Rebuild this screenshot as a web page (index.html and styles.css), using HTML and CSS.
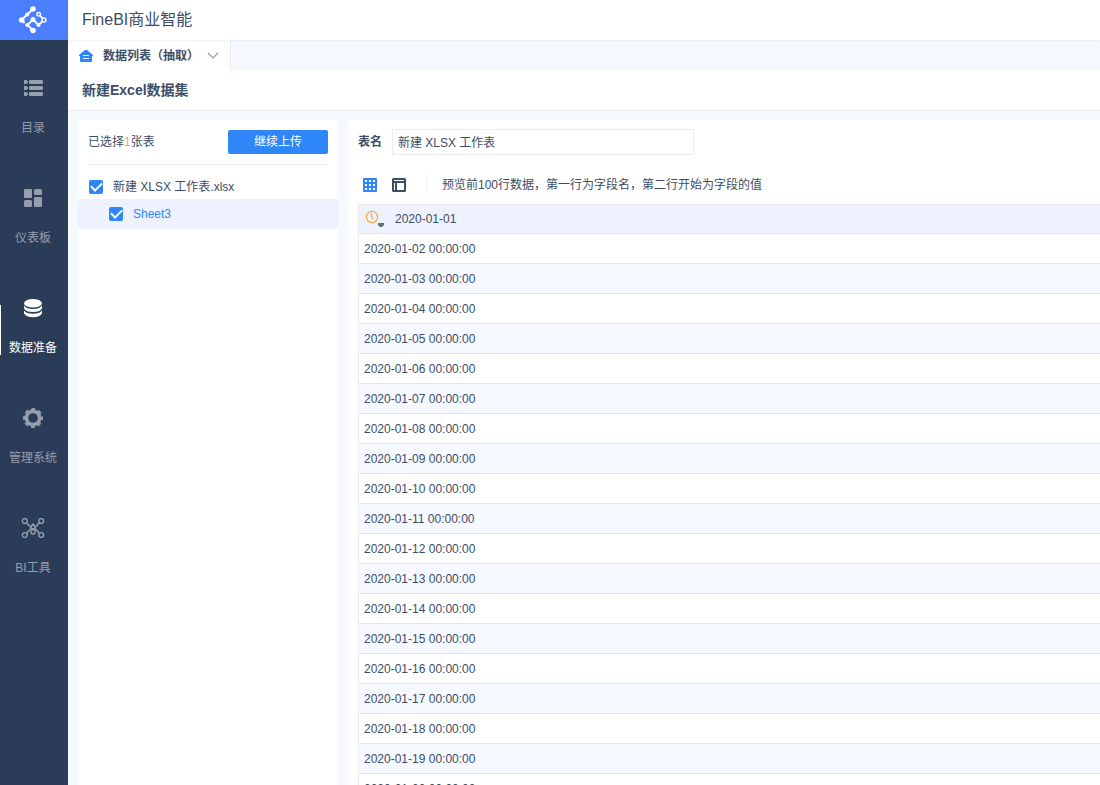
FILE: index.html
```html
<!DOCTYPE html>
<html lang="zh-CN">
<head>
<meta charset="utf-8">
<meta name="viewport" content="width=device-width, initial-scale=1">
<title>FineBI商业智能</title>
<link rel="stylesheet" href="styles.css">
</head>
<body>
<div class="app">
  <aside class="sidebar">
    <a class="logo" href="#" aria-label="FineBI">
      <svg width="30" height="30" viewBox="0 0 30 30" fill="none" stroke="#fff" stroke-width="1.800">
        <path d="M15 4L3.500 15M21 9.500L26 15l-5.500 5L15 14.500 9.500 20l5.500 5.500M3.500 15l3 3"/>
        <g fill="#fff" stroke="none"><circle cx="15" cy="4" r="2.800"/><circle cx="3.700" cy="15" r="2.800"/><circle cx="15" cy="25.500" r="2.800"/><circle cx="9.300" cy="9.500" r="2.100"/><circle cx="9.300" cy="20" r="2.100"/><circle cx="15" cy="14.500" r="2.500"/><circle cx="20.500" cy="20" r="2"/></g>
        <g fill="#4b7dff" stroke-width="1.400"><circle cx="20.700" cy="9.300" r="1.800"/><circle cx="26" cy="15" r="2"/></g>
      </svg>
    </a>
    <nav class="nav">
      <a class="nav-item" href="#">
        <svg width="20" height="20" viewBox="0 0 20 20" fill="currentColor"><path d="M1 2h3v1h1v2H4v1H1zM1 8h3v1h1v2H4v1H1zM1 14h3v1h1v2H4v1H1z"/><rect x="6" y="2" width="14" height="4" rx="1"/><rect x="6" y="8" width="14" height="4" rx="1"/><rect x="6" y="14" width="14" height="4" rx="1"/></svg>
        <span>目录</span>
      </a>
      <a class="nav-item" href="#">
        <svg width="20" height="20" viewBox="0 0 20 20" fill="currentColor"><rect x="1" y="1" width="8" height="9" rx="1"/><rect x="11" y="1" width="8" height="6" rx="1.500"/><rect x="1" y="12" width="8" height="7" rx="1.500"/><rect x="11" y="9" width="8" height="10" rx="1"/></svg>
        <span>仪表板</span>
      </a>
      <a class="nav-item nav-item-active" href="#" aria-current="page">
        <svg width="20" height="20" viewBox="0 0 20 20" fill="currentColor"><ellipse cx="10" cy="5.300" rx="9" ry="4.300"/><path d="M1 7.500q2.500 3.500 9 3.500t9-3.500v3q-2 3.500-9 3.500t-9-3.500zM1 12.500q2.500 3.200 9 3.200t9-3.200v3q-2 3.700-9 3.700t-9-3.700z"/></svg>
        <span>数据准备</span>
      </a>
      <a class="nav-item" href="#">
        <svg width="20" height="20" viewBox="0 0 20 20"><g fill="none" stroke="currentColor"><circle cx="10" cy="10" r="6.600" stroke-width="3.600"/><circle cx="10" cy="10" r="8.800" stroke-width="2.400" stroke-dasharray="3.900 3.012" stroke-dashoffset="1.950"/></g></svg>
        <span>管理系统</span>
      </a>
      <a class="nav-item" href="#">
        <svg width="24" height="20" viewBox="0 0 24 20" fill="none" stroke="currentColor" stroke-width="1.400"><circle cx="3.800" cy="3" r="2.400"/><circle cx="20.200" cy="3" r="2.400"/><circle cx="3.800" cy="17" r="2.400"/><circle cx="20.200" cy="17" r="2.400"/><path d="M5.500 4.700L9.500 9M18.500 4.700L14.500 9M5.500 15.300l4.500-4.800M18.500 15.300L14 10.500M12 6l2.500 3-2.500 2.500L9.500 9z"/><circle cx="12" cy="13.800" r="2.200"/></svg>
        <span>BI工具</span>
      </a>
    </nav>
  </aside>

  <div class="main">
    <header class="topbar">FineBI商业智能</header>
    <div class="tabs">
      <button class="tab" type="button">
        <svg width="14" height="12" viewBox="0 0 14 12"><path d="M6 0h2l6 5v1h-1v5q0 1-1 1H2q-1 0-1-1V6H0V5z" fill="#2e86f8"/><path d="M4 5.500h6M4 8.500h6" stroke="#fff"/></svg>
        <span class="tab-name">数据列表（抽取）</span>
        <svg width="12" height="8" viewBox="0 0 12 8" fill="none" stroke="#8f9bab" stroke-width="1.200"><path d="M1 1l5 5 5-5"/></svg>
      </button>
    </div>
    <h1 class="title">新建Excel数据集</h1>

    <div class="content">
      <section class="panel files">
        <div class="files-head">
          <span>已选择<em class="count">1</em>张表</span>
          <button class="upload" type="button">继续上传</button>
        </div>
        <label class="file"><input class="check" type="checkbox" checked><span>新建 XLSX 工作表.xlsx</span></label>
        <label class="file sheet"><input class="check" type="checkbox" checked><span>Sheet3</span></label>
      </section>

      <section class="panel preview">
        <div class="name-row">
          <label class="name-label" for="table-name">表名</label>
          <input class="name-input" id="table-name" type="text" value="新建 XLSX 工作表">
        </div>
        <div class="tools">
          <button class="tool" type="button" aria-label="表格预览">
            <svg width="14" height="14" viewBox="0 0 14 14"><rect width="14" height="14" rx="1" fill="#2e86f8"/><path fill="#fff" d="M2 2h2v2H2zM6 2h2v2H6zM10 2h2v2h-2zM2 6h2v2H2zM6 6h2v2H6zM10 6h2v2h-2zM2 10h2v2H2zM6 10h2v2H6zM10 10h2v2h-2z"/></svg>
          </button>
          <button class="tool" type="button" aria-label="字段设置">
            <svg width="14" height="14" viewBox="0 0 14 14"><path fill="#3d4d66" fill-rule="evenodd" d="M1 0h12l1 1v12l-1 1H1l-1-1V1zM2 2v1h10V2zM2 5v7h1V5zM5 5v7h7V5z"/></svg>
          </button>
          <p class="hint">预览前100行数据，第一行为字段名，第二行开始为字段的值</p>
        </div>
        <table class="grid">
          <thead>
            <tr><th scope="col"><div class="field">
              <svg width="20" height="18" viewBox="0 0 20 18"><g fill="none" stroke="#faa93a" stroke-width="1.200"><circle cx="8" cy="7" r="5.600"/><path d="M7.500 3v3.500L9 9"/></g><path d="M14 13h6v2l-2 2h-2l-2-2z" fill="#5f6d80"/></svg>
              <span>2020-01-01</span></div></th></tr>
          </thead>
          <tbody>
            <tr><td>2020-01-02 00:00:00</td></tr>
            <tr><td>2020-01-03 00:00:00</td></tr>
            <tr><td>2020-01-04 00:00:00</td></tr>
            <tr><td>2020-01-05 00:00:00</td></tr>
            <tr><td>2020-01-06 00:00:00</td></tr>
            <tr><td>2020-01-07 00:00:00</td></tr>
            <tr><td>2020-01-08 00:00:00</td></tr>
            <tr><td>2020-01-09 00:00:00</td></tr>
            <tr><td>2020-01-10 00:00:00</td></tr>
            <tr><td>2020-01-11 00:00:00</td></tr>
            <tr><td>2020-01-12 00:00:00</td></tr>
            <tr><td>2020-01-13 00:00:00</td></tr>
            <tr><td>2020-01-14 00:00:00</td></tr>
            <tr><td>2020-01-15 00:00:00</td></tr>
            <tr><td>2020-01-16 00:00:00</td></tr>
            <tr><td>2020-01-17 00:00:00</td></tr>
            <tr><td>2020-01-18 00:00:00</td></tr>
            <tr><td>2020-01-19 00:00:00</td></tr>
            <tr><td>2020-01-20 00:00:00</td></tr>
          </tbody>
        </table>
      </section>
    </div>
  </div>
</div>
</body>
</html>
```
FILE: styles.css
```css
* { box-sizing: border-box; }

body {
  margin: 0;
  background: #f6f9ff;
  color: #3d4d66;
  font: 12px/18px "Liberation Sans", "Noto Sans CJK SC", sans-serif;
}

button, input { font: inherit; color: inherit; }
button { border: 0; background: none; padding: 0; cursor: pointer; }
a { color: inherit; text-decoration: none; }
svg { display: block; flex: none; }

.app { display: flex; height: 100vh; overflow: hidden; }

/* Sidebar */
.sidebar { flex: none; width: 68px; background: #2b3c59; }
.logo {
  display: flex;
  align-items: center;
  justify-content: center;
  height: 40px;
  padding-right: 2px;
  background: #4b7dff;
}
.nav { padding-top: 15px; }
.nav-item {
  position: relative;
  display: flex;
  flex-direction: column;
  align-items: center;
  gap: 21px;
  height: 110px;
  padding: 23px 2px 0 0;
  color: #959eac;
}
.nav-item-active { color: #fff; }
.nav-item-active::before {
  content: "";
  position: absolute;
  left: 0;
  top: 30px;
  width: 1px;
  height: 50px;
  background: #fff;
}

/* Page header */
.main { flex: 1; min-width: 0; display: flex; flex-direction: column; }
.topbar {
  position: relative;
  flex: none;
  height: 40px;
  padding-left: 14px;
  background: #fff;
  box-shadow: 0 1px 2px rgba(43, 60, 89, 0.08);
  font-size: 16px;
  line-height: 40px;
}
.tabs { flex: none; display: flex; height: 30px; }
.tab {
  display: flex;
  align-items: center;
  padding: 1px 11px 0 11px;
  border-right: 1px solid #e8eaf0;
  background: #fff;
}
.tab-name { margin: 0 8px 0 10px; font-weight: bold; }
.title {
  flex: none;
  margin: 0;
  padding: 1px 0 0 14px;
  border-bottom: 1px solid #ebebf0;
  background: #fff;
  font-size: 14px;
  line-height: 39px;
}

/* Panels */
.content { flex: 1; min-height: 0; display: flex; gap: 10px; padding: 9px 0 0 10px; }
.panel { background: #fff; overflow: hidden; }
.files { flex: none; width: 260px; }
.files-head {
  display: flex;
  align-items: center;
  justify-content: space-between;
  height: 45px;
  margin: 0 10px 10px;
  border-bottom: 1px solid #ebebeb;
}
.count { color: #faa93a; font-style: normal; }
.upload {
  width: 100px;
  height: 24px;
  border-radius: 2px;
  background: #2e86f8;
  color: #fff;
}
.file { display: flex; align-items: center; gap: 10px; height: 24px; padding-left: 11px; }
.sheet { height: 30px; padding-left: 31px; background: #eef2ff; color: #2e86f8; }
.check {
  appearance: none;
  width: 14px;
  height: 14px;
  margin: 0;
  border-radius: 2px;
  background: #2e86f8;
  display: grid;
  place-items: center;
}
.check:checked::before {
  content: "";
  width: 9px;
  height: 5px;
  margin-bottom: 3px;
  border: solid #fff;
  border-width: 0 0 2px 2px;
  transform: rotate(-45deg);
}

/* Preview */
.preview { flex: 1; min-width: 0; padding: 9px 0 0 10px; }
.name-row { display: flex; align-items: center; gap: 10px; }
.name-label { font-weight: bold; }
.name-input {
  width: 302px;
  height: 26px;
  padding: 0 5px 2px;
  border: 1px solid #ebebeb;
  border-radius: 0;
  background: #fff;
}
.tools { display: flex; align-items: center; gap: 15px; height: 49px; padding: 10px 0 0 5px; }
.tool { display: flex; align-items: center; }
.hint { margin: 0 0 0 5px; padding: 1px 0 0 15px; border-left: 1px solid #f0f0f2; }
.grid {
  width: 100%;
  border-collapse: separate;
  border-spacing: 0;
  border: solid #ebebeb;
  border-width: 1px 0 0 1px;
}
.grid th, .grid td {
  height: 30px;
  padding: 0 5px;
  border-bottom: 1px solid #dbe6f9;
  font-weight: normal;
  text-align: left;
}
.grid th { height: 29px; background: #eef2ff; }
.grid tbody tr:nth-child(even) { background: #f6f9ff; }
.field { display: flex; align-items: center; gap: 11px; }
```
